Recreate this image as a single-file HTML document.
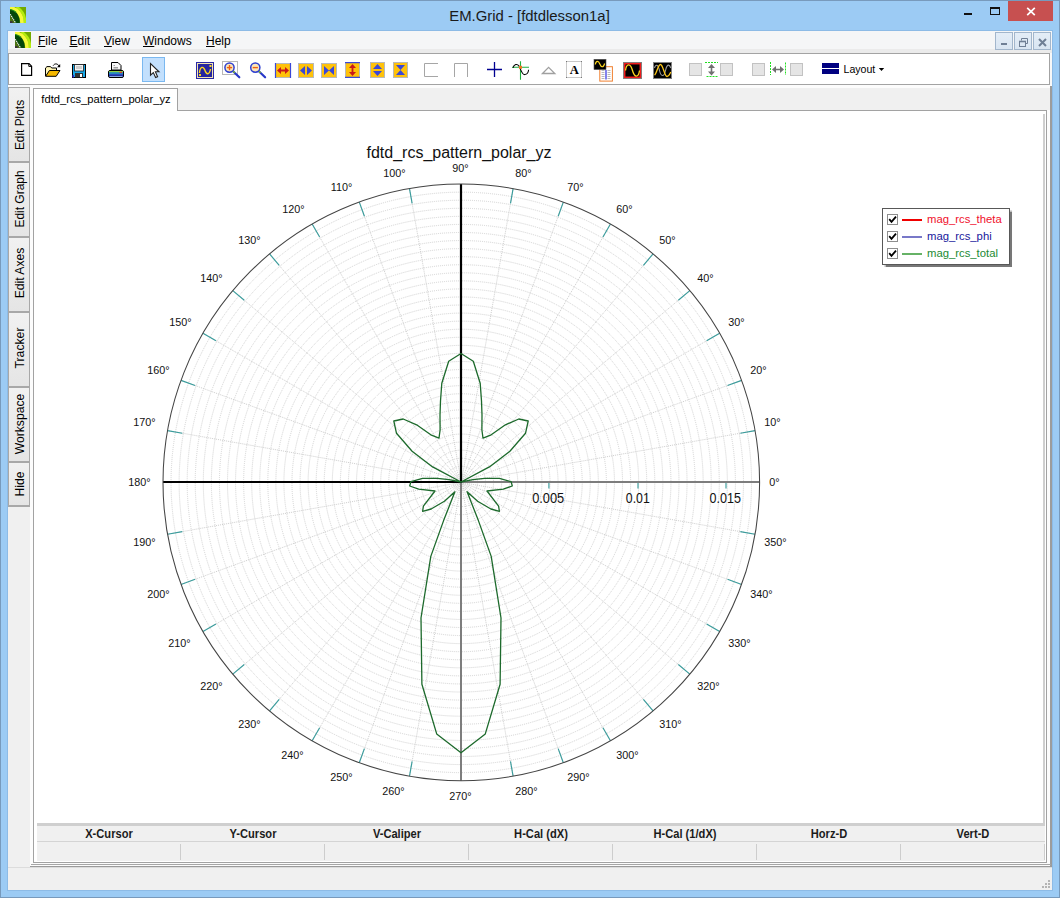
<!DOCTYPE html>
<html>
<head>
<meta charset="utf-8">
<title>EM.Grid - [fdtdlesson1a]</title>
<style>
html,body{margin:0;padding:0;font-family:"Liberation Sans",sans-serif;}
body{width:1060px;height:898px;overflow:hidden;background:#9ccbf4;font-family:"Liberation Sans",sans-serif;color:#000;}
#win{position:relative;width:1060px;height:898px;background:#9ccbf4;overflow:hidden;}
#win div,#win span,#win svg{position:absolute;box-sizing:border-box;}
.frame{left:0;top:0;width:1060px;height:898px;border:1px solid #789abc;}
.title{left:329.5px;top:5px;width:400px;height:22px;text-align:center;font-size:14.9px;line-height:22px;color:#1a1a1a;white-space:nowrap;}
.client{left:8px;top:31px;width:1044px;height:859px;background:#f0f0f0;box-shadow:0 0 0 1px #8dbbe6;}
.menubar{left:8px;top:31px;width:1044px;height:18px;background:#f5f6f7;}
.menustrip{left:8px;top:49px;width:1044px;height:4px;background:#ebebeb;}
.menu{top:33px;height:16px;font-size:12px;line-height:16px;white-space:nowrap;color:#000;}
.menu u{text-decoration:underline;text-decoration-thickness:1px;text-underline-offset:0.6px;}
.toolbar{left:8px;top:53px;width:1042px;height:32px;background:#fff;border:1px solid #a3a3a3;}
.tbgap{left:1050px;top:53px;width:2px;height:33px;background:#f8f8f8;}
.closebtn{left:1008px;top:1px;width:45px;height:20px;background:#c75050;}
.mdib{top:32px;width:18px;height:18px;border:1px solid #a2b6cc;background:linear-gradient(#e4edf7,#d9e5f2);}
.sidetab{left:8px;width:22px;background:linear-gradient(180deg,#f1f1f1,#e5e5e5);border:1px solid #a8a8a8;border-top:none;border-bottom:2px solid #a8a8a8;}
.sidetab span{left:50%;top:50%;transform:translate(-50%,-50%) rotate(-90deg) scaleX(var(--sx,0.89));white-space:nowrap;font-size:13.6px;color:#000;margin-left:-0.5px}
.mdi{left:30px;top:85px;width:1022px;height:782px;background:#fcfcfc;}
.mdir{left:1050px;top:86px;width:2px;height:781px;background:#9c9c9c;}
.mdib1{left:31px;top:864px;width:1020px;height:1px;background:#a6a6a6;}
.mdib2{left:30px;top:866px;width:1022px;height:1.5px;background:#9a9a9a;}
.strip{left:8px;top:85px;width:1044px;height:2px;background:#fbfbfb;}
.tabstrip{left:34px;top:88px;width:1016px;height:22px;background:#f0f0f0;}
.tabpane{left:33px;top:110px;width:1014px;height:753px;border:1px solid #a2a2a2;background:#fff;}
.plot{left:34px;top:111px;width:1011px;height:714px;background:#fff;}
.plotr{left:1043px;top:114px;width:2px;height:711px;background:#cfcfcf;}
.plotb{z-index:3;left:37px;top:823px;width:1008px;height:2.5px;background:#cfcfcf;}
.filetab{left:33px;top:88px;width:145px;height:23px;background:#fff;border:1px solid #a2a2a2;border-bottom:none;font-size:11.2px;line-height:21.5px;text-align:center;white-space:nowrap;padding-left:1px}
.chart{left:34px;top:109px;}
.legend{left:881.5px;top:208px;width:128px;height:57px;background:#fff;border:1px solid #585858;box-shadow:1.5px 1.5px 1px #777;}
.legend .cb{left:4px;width:11px;height:11px;border:1px solid #8e8e8e;background:#fff;}
.legend .ln{left:19.5px;width:19.5px;height:2px;}
.legend .tx{left:44.5px;font-size:11.3px;line-height:13px;white-space:nowrap;}
.th{top:825.5px;height:16px;font-size:12.5px;font-weight:bold;line-height:17px;text-align:center;color:#1c1c1c;white-space:nowrap;transform:scaleX(0.89);}
.tbg{left:37px;top:825px;width:1008px;height:35.5px;background:#f0f0f0;}
.thl{left:37px;top:841px;width:1008px;height:1px;background:#d4d4d4;}
.td{top:843.5px;height:16px;width:1px;background:#cdcdcd;}
.status{left:8px;top:867px;width:1044px;height:23px;background:#f0f0f0;border-top:1px solid #dcdcdc;}
</style>
</head>
<body>
<div id="win">
<div class="frame"></div>
<!-- title bar -->
<svg style="left:10px;top:7px" width="16" height="16" viewBox="0 0 16 16"><rect width="16" height="16" fill="#72aa00"/><path d="M6.5 0C11.5 3 15.2 9 15 16" fill="none" stroke="#b4ec10" stroke-width="2.6"/><path d="M0 0.8C7 1.5 12.2 8 12 16" fill="none" stroke="#f6fa3c" stroke-width="3.6"/><path d="M0 2.2C6 3 10 9 9.8 16H0Z" fill="#04480a"/><path d="M0 2.5C2.5 2.8 4.5 3.8 6 5.2" fill="none" stroke="#2c9a20" stroke-width="1.2"/><path d="M0 7.6L5.4 16H0Z" fill="#4a7212"/><path d="M0.2 7.2L5.8 16.2" fill="none" stroke="#f0f0f0" stroke-width="1.1" stroke-dasharray="1.3 0.7"/><rect x="0" y="14.2" width="2.6" height="1.8" fill="#3a3040"/></svg>
<div class="title">EM.Grid - [fdtdlesson1a]</div>
<div style="left:964px;top:13px;width:8px;height:2px;background:#111"></div>
<div style="left:990px;top:7px;width:10px;height:8px;border:1px solid #111;border-top:2px solid #111"></div>
<div class="closebtn"><svg style="left:17.5px;top:6px" width="10" height="9" viewBox="0 0 10 9"><path d="M1.2 0.8L8.8 8.2M8.8 0.8L1.2 8.2" stroke="#fff" stroke-width="1.7"/></svg></div>
<!-- client -->
<div class="client"></div>
<div class="menubar"></div>
<div class="menustrip"></div>
<svg style="left:15px;top:32px" width="16" height="16" viewBox="0 0 16 16"><rect width="16" height="16" fill="#72aa00"/><path d="M6.5 0C11.5 3 15.2 9 15 16" fill="none" stroke="#b4ec10" stroke-width="2.6"/><path d="M0 0.8C7 1.5 12.2 8 12 16" fill="none" stroke="#f6fa3c" stroke-width="3.6"/><path d="M0 2.2C6 3 10 9 9.8 16H0Z" fill="#04480a"/><path d="M0 2.5C2.5 2.8 4.5 3.8 6 5.2" fill="none" stroke="#2c9a20" stroke-width="1.2"/><path d="M0 7.6L5.4 16H0Z" fill="#4a7212"/><path d="M0.2 7.2L5.8 16.2" fill="none" stroke="#f0f0f0" stroke-width="1.1" stroke-dasharray="1.3 0.7"/><rect x="0" y="14.2" width="2.6" height="1.8" fill="#3a3040"/></svg>
<div class="menu" style="left:38px"><u>F</u>ile</div>
<div class="menu" style="left:69.5px"><u>E</u>dit</div>
<div class="menu" style="left:104px"><u>V</u>iew</div>
<div class="menu" style="left:143px"><u>W</u>indows</div>
<div class="menu" style="left:206px"><u>H</u>elp</div>
<div class="mdib" style="left:995px"><div style="left:5px;top:10px;width:6px;height:2px;background:#6f7f95"></div></div>
<div class="mdib" style="left:1014px"><svg style="left:4px;top:5px" width="9" height="9" viewBox="0 0 9 9"><path d="M2.5 2.5V0.5H8.5V5.5H6.5" fill="none" stroke="#6f7f95"/><rect x="0.5" y="3.5" width="6" height="5" fill="none" stroke="#6f7f95"/><path d="M0 3.5H7" stroke="#6f7f95" stroke-width="1.6"/></svg></div>
<div class="mdib" style="left:1033px"><svg style="left:4px;top:5px" width="9" height="9" viewBox="0 0 9 9"><path d="M1 1L8 8M8 1L1 8" stroke="#6f7f95" stroke-width="2"/></svg></div>
<!-- toolbar -->
<div class="toolbar"></div><div class="tbgap"></div>
<svg style="left:0;top:54px" width="1060" height="30" viewBox="0 54 1060 30">
<path d="M21.6 63.6H29L31.6 66.2V75.4H21.6Z" fill="#fff" stroke="#000" stroke-width="1.2"/><path d="M28.8 63.6V66.4H31.6" fill="none" stroke="#000" stroke-width="1"/>
<path d="M45.5 76V68L47 66.6H50.5L51.7 68H56.5V70.5" fill="#fff6b8" stroke="#000" stroke-width="1"/><path d="M45.6 76.3L49.4 70.5H60L56.2 76.3Z" fill="#f5b800" stroke="#000" stroke-width="1"/><path d="M53.2 65.6C54.5 63.3 57.5 63.2 59.2 66.2" fill="none" stroke="#000" stroke-width="1"/><path d="M57 67.2H60.2V64Z" fill="#000"/>
<rect x="72.5" y="64.5" width="13" height="13" fill="#18a8e8" stroke="#000" stroke-width="1"/><rect x="74.5" y="64.5" width="9" height="6.5" fill="#f4f4f4" stroke="#222" stroke-width="0.8"/><rect x="76" y="66" width="6" height="3" fill="#cfcfcf"/><rect x="75" y="73" width="8" height="4.5" fill="#333"/><rect x="80" y="74" width="2" height="3" fill="#fff"/><rect x="72.5" y="75" width="1.5" height="2.5" fill="#3030d0"/>
<path d="M111.5 70V62.5H118L121 65.5V70Z" fill="#f8f8f8" stroke="#000" stroke-width="1"/><path d="M113.5 65.5H115M113.5 67.5H118M113.5 69H118" stroke="#888" stroke-width="0.8"/><rect x="108.5" y="70.5" width="15" height="7" rx="1.5" fill="#1e2f9a" stroke="#000" stroke-width="1"/><rect x="109" y="71" width="14" height="1.4" fill="#8fd045"/><rect x="109" y="72.4" width="14" height="1.4" fill="#28b0c8"/><rect x="109" y="73.8" width="14" height="1.4" fill="#2848c0"/><rect x="119.5" y="71.8" width="2.5" height="1.2" fill="#e03030"/><rect x="109.5" y="76" width="13" height="1" fill="#88a8e0"/>
<rect x="142.5" y="57.5" width="22" height="24" fill="#c3e0fd" stroke="#7ab8f0" stroke-width="1"/>
<path d="M150.5 63.5V75.2L153.3 72.6L155.6 77.6L157.6 76.7L155.4 71.8H159Z" fill="#fff" stroke="#222" stroke-width="1.1" stroke-linejoin="miter"/>
<rect x="196.5" y="62.5" width="17" height="16" fill="#f3e4b0" stroke="#2a2aa8" stroke-width="1"/><rect x="198" y="64" width="14" height="13" fill="#2525a0"/><path d="M199.5 73C200 66 203.5 66 205 70.5S209.5 75 210.5 69" fill="none" stroke="#ffd820" stroke-width="1.4"/><rect x="209.5" y="65" width="2" height="2" fill="#ffd820"/><rect x="199" y="74" width="2" height="2" fill="#ffd820"/>
<rect x="222.5" y="61.5" width="15" height="13" fill="#fff" stroke="#b8b8b8" stroke-width="1"/>
<path d="M233.3 71.5L239.3 77.3" stroke="#2838c8" stroke-width="2.2" stroke-linecap="round"/>
<path d="M232.7 70.8L234.7 72.8" stroke="#80c020" stroke-width="1.6"/>
<circle cx="229.5" cy="67.6" r="4.6" fill="#fbe6b8" stroke="#3040d0" stroke-width="1.5"/>
<path d="M226.9 67.6H232.1" stroke="#f06010" stroke-width="1.4"/>
<path d="M229.5 65V70.2" stroke="#f06010" stroke-width="1.4"/>
<path d="M259.1 71.5L265.1 77.3" stroke="#2838c8" stroke-width="2.2" stroke-linecap="round"/>
<path d="M258.5 70.8L260.5 72.8" stroke="#80c020" stroke-width="1.6"/>
<circle cx="255.3" cy="67.6" r="4.6" fill="#fbe6b8" stroke="#3040d0" stroke-width="1.5"/>
<path d="M252.7 67.6H257.9" stroke="#f06010" stroke-width="1.4"/>
<rect x="275" y="63" width="16" height="15" fill="#ffc20a"/><path d="M275 63.5H291M275 77.5H291" stroke="#b9b9b9"/><path d="M275.5 63V78M290.5 63V78" stroke="#3a48d8" stroke-width="1.2"/>
<path d="M277 70.5L281 67V69.6H285V67L289 70.5L285 74V71.4H281V74Z" fill="#c8181c"/>
<rect x="298.5" y="63.5" width="15" height="14" fill="#ffc20a" stroke="#b9b9b9"/><path d="M300 70.5L305 66V75ZM312 70.5L307 66V75Z" fill="#3a48d8"/>
<rect x="321.5" y="63.5" width="15" height="14" fill="#ffc20a" stroke="#b9b9b9"/><path d="M324 66L334 75V66L324 75Z" fill="#3a48d8"/>
<rect x="345" y="62" width="15" height="16" fill="#ffc20a"/><path d="M345.5 62V78M359.5 62V78" stroke="#b9b9b9"/><path d="M345 62.6H360M345 77.4H360" stroke="#3a48d8" stroke-width="1.2"/>
<path d="M352.5 64L356 68H353.4V72H356L352.5 76L349 72H351.6V68H349Z" fill="#c8181c"/>
<rect x="370.5" y="62.5" width="14" height="15" fill="#ffc20a" stroke="#b9b9b9"/><path d="M377.5 64L382 69H373ZM377.5 76L382 71H373Z" fill="#3a48d8"/>
<rect x="393.5" y="62.5" width="14" height="15" fill="#ffc20a" stroke="#b9b9b9"/><path d="M396 65H405L396 75H405Z" fill="#3a48d8"/>
<path d="M438 63.5H424.5V76.5H438" fill="none" stroke="#a6a6a6" stroke-width="1"/>
<path d="M454.5 77V63.5H467.5V77" fill="none" stroke="#a6a6a6" stroke-width="1"/>
<path d="M487 69.5H502M494.5 62V77" stroke="#000090" stroke-width="1.3"/>
<path d="M520.5 61.3V79.8M512 67.3H529" stroke="#20b040" stroke-width="1.1"/>
<path d="M513 67.8C514 64 517.3 63.6 518.8 65.8C520.8 69 521.8 74.8 524.8 74.6C527.3 74.4 528.4 72 528.6 69.8" fill="none" stroke="#000" stroke-width="1.05"/>
<rect x="519" y="65.8" width="3" height="3" fill="#f07820"/>
<path d="M542.5 73.5L548.6 67.4L554.8 73.5Z" fill="none" stroke="#a0a0a0" stroke-width="1.3"/>
<rect x="566.5" y="61.5" width="15" height="16" fill="#fff" stroke="#c8c8c8"/>
<g fill="#777"><rect x="566" y="61" width="1" height="1"/><rect x="581" y="61" width="1" height="1"/><rect x="566" y="77" width="1" height="1"/><rect x="581" y="77" width="1" height="1"/></g>
<text x="574.2" y="73.9" font-family="Liberation Serif, serif" font-weight="bold" font-size="12.6" text-anchor="middle" fill="#000">A</text>
<rect x="599.8" y="66.7" width="12.6" height="14.4" fill="#fff" stroke="#f08030" stroke-width="1"/>
<path d="M601.5 70.5H604.5M601.5 72.5H604.5M601.5 74.5H604.5M601.5 76.5H604.5M601.5 78.5H604.5M607.5 70.5H610.5M607.5 72.5H610.5M607.5 74.5H610.5M607.5 76.5H610.5M607.5 78.5H610.5" stroke="#b0b0b0" stroke-width="0.9"/>
<path d="M606 70V79.5" stroke="#3030e0" stroke-width="1.2"/>
<rect x="594" y="59.3" width="12" height="10.3" fill="#000" stroke="#555" stroke-width="0.6"/>
<path d="M595.3 64.5C596 60.5 598.5 60.5 599.8 64S603.5 68 604.6 63.5" fill="none" stroke="#ffd820" stroke-width="1.2"/>
<rect x="623.5" y="62.5" width="18" height="16" fill="#000" stroke="#808080"/><rect x="624.7" y="63.7" width="15.6" height="13.6" fill="none" stroke="#f01c1c" stroke-width="1.5"/>
<path d="M625.5 70.5C626.5 63 630.5 63 632.5 70.5S638.5 78 639.5 70.5" fill="none" stroke="#ffd820" stroke-width="1.3"/>
<rect x="653.5" y="62.5" width="18" height="16" fill="#000" stroke="#808080"/>
<path d="M654.5 68C655.5 64 658 64 659.5 70.5S664 77.5 665.5 70.5S669.5 64 670.8 68" fill="none" stroke="#9a9a9a" stroke-width="1.1"/>
<path d="M654.5 75C656.5 74 658 64.5 660.5 64.5S664.5 76.5 667 76.5S669.5 74 670.8 72" fill="none" stroke="#ffc818" stroke-width="1.3"/>
<rect x="689.5" y="63.5" width="12" height="12" fill="#e5e5e5" stroke="#c2c2c2"/>
<rect x="720.5" y="63.5" width="12" height="12" fill="#e5e5e5" stroke="#c2c2c2"/>
<rect x="752.5" y="63.5" width="12" height="12" fill="#e5e5e5" stroke="#c2c2c2"/>
<rect x="790.5" y="63.5" width="12" height="12" fill="#e5e5e5" stroke="#c2c2c2"/>
<path d="M705 62.5H718M706.5 76.5H718" stroke="#20e020" stroke-width="1" stroke-dasharray="2 1"/>
<path d="M711.5 64L715 68H712.3V71.5H715L711.5 75.5L708 71.5H710.7V68H708Z" fill="#707070"/>
<path d="M770.5 62V75M785.5 62.5V75" stroke="#20e020" stroke-width="1" stroke-dasharray="2 1"/>
<path d="M772 69.5L776 66V68.7H780V66L784 69.5L780 73V70.3H776V73Z" fill="#707070"/>
<rect x="822" y="63" width="17" height="11" fill="#000080"/><rect x="822" y="68" width="17" height="1" fill="#fff"/>
<text x="843.5" y="73" font-family="Liberation Sans, sans-serif" font-size="10.6" fill="#000">Layout</text>
<path d="M878.8 68H884.2L881.5 71Z" fill="#000"/>
</svg>
<!-- side tabs -->
<div class="sidetab" style="top:87px;height:76px;border-top:1px solid #a8a8a8"><span style="--sx:0.875;margin-top:0.6px">Edit Plots</span></div>
<div class="sidetab" style="top:163px;height:75px"><span style="--sx:0.88;margin-top:-0.8px">Edit Graph</span></div>
<div class="sidetab" style="top:238px;height:75px"><span style="--sx:0.895;margin-top:-2px">Edit Axes</span></div>
<div class="sidetab" style="top:313px;height:75px"><span style="--sx:0.9;margin-top:-1.7px">Tracker</span></div>
<div class="sidetab" style="top:388px;height:75px"><span style="--sx:0.892;margin-top:-0.6px">Workspace</span></div>
<div class="sidetab" style="top:463px;height:44px"><span style="--sx:0.89;margin-top:0px">Hide</span></div>
<!-- tab pane -->
<div class="strip"></div>
<div class="mdi"></div>
<div class="tabstrip"></div>
<div class="tabpane"></div>
<div class="plot"></div>
<div class="plotr"></div>
<div class="plotb"></div>
<div class="mdir"></div>
<div class="mdib1"></div>
<div class="mdib2"></div>
<div class="filetab">fdtd_rcs_pattern_polar_yz</div>
<svg class="chart" width="1010" height="716" viewBox="34 109 1010 716">
<g fill="none" stroke="#d2d2d2" stroke-width="1" stroke-dasharray="1 1">
<circle cx="461.30" cy="482.40" r="8.06"/>
<circle cx="461.30" cy="482.40" r="16.12"/>
<circle cx="461.30" cy="482.40" r="24.19"/>
<circle cx="461.30" cy="482.40" r="32.25"/>
<circle cx="461.30" cy="482.40" r="40.31"/>
<circle cx="461.30" cy="482.40" r="48.37"/>
<circle cx="461.30" cy="482.40" r="56.44"/>
<circle cx="461.30" cy="482.40" r="64.50"/>
<circle cx="461.30" cy="482.40" r="72.56"/>
<circle cx="461.30" cy="482.40" r="80.62"/>
<circle cx="461.30" cy="482.40" r="88.68"/>
<circle cx="461.30" cy="482.40" r="96.75"/>
<circle cx="461.30" cy="482.40" r="104.81"/>
<circle cx="461.30" cy="482.40" r="112.87"/>
<circle cx="461.30" cy="482.40" r="120.93"/>
<circle cx="461.30" cy="482.40" r="128.99"/>
<circle cx="461.30" cy="482.40" r="137.06"/>
<circle cx="461.30" cy="482.40" r="145.12"/>
<circle cx="461.30" cy="482.40" r="153.18"/>
<circle cx="461.30" cy="482.40" r="161.24"/>
<circle cx="461.30" cy="482.40" r="169.31"/>
<circle cx="461.30" cy="482.40" r="177.37"/>
<circle cx="461.30" cy="482.40" r="185.43"/>
<circle cx="461.30" cy="482.40" r="193.49"/>
<circle cx="461.30" cy="482.40" r="201.55"/>
<circle cx="461.30" cy="482.40" r="209.62"/>
<circle cx="461.30" cy="482.40" r="217.68"/>
<circle cx="461.30" cy="482.40" r="225.74"/>
<circle cx="461.30" cy="482.40" r="233.80"/>
<circle cx="461.30" cy="482.40" r="241.86"/>
<circle cx="461.30" cy="482.40" r="249.93"/>
<circle cx="461.30" cy="482.40" r="257.99"/>
<circle cx="461.30" cy="482.40" r="266.05"/>
<circle cx="461.30" cy="482.40" r="274.11"/>
<circle cx="461.30" cy="482.40" r="282.18"/>
<circle cx="461.30" cy="482.40" r="290.24"/>
</g>
<g stroke="#cecece" stroke-width="1" stroke-dasharray="1 1">
<line x1="461.30" y1="482.40" x2="755.07" y2="430.60"/>
<line x1="461.30" y1="482.40" x2="741.61" y2="380.38"/>
<line x1="461.30" y1="482.40" x2="719.64" y2="333.25"/>
<line x1="461.30" y1="482.40" x2="689.81" y2="290.66"/>
<line x1="461.30" y1="482.40" x2="653.04" y2="253.89"/>
<line x1="461.30" y1="482.40" x2="610.45" y2="224.06"/>
<line x1="461.30" y1="482.40" x2="563.32" y2="202.09"/>
<line x1="461.30" y1="482.40" x2="513.10" y2="188.63"/>
<line x1="461.30" y1="482.40" x2="409.50" y2="188.63"/>
<line x1="461.30" y1="482.40" x2="359.28" y2="202.09"/>
<line x1="461.30" y1="482.40" x2="312.15" y2="224.06"/>
<line x1="461.30" y1="482.40" x2="269.56" y2="253.89"/>
<line x1="461.30" y1="482.40" x2="232.79" y2="290.66"/>
<line x1="461.30" y1="482.40" x2="202.96" y2="333.25"/>
<line x1="461.30" y1="482.40" x2="180.99" y2="380.38"/>
<line x1="461.30" y1="482.40" x2="167.53" y2="430.60"/>
<line x1="461.30" y1="482.40" x2="167.53" y2="534.20"/>
<line x1="461.30" y1="482.40" x2="180.99" y2="584.42"/>
<line x1="461.30" y1="482.40" x2="202.96" y2="631.55"/>
<line x1="461.30" y1="482.40" x2="232.79" y2="674.14"/>
<line x1="461.30" y1="482.40" x2="269.56" y2="710.91"/>
<line x1="461.30" y1="482.40" x2="312.15" y2="740.74"/>
<line x1="461.30" y1="482.40" x2="359.28" y2="762.71"/>
<line x1="461.30" y1="482.40" x2="409.50" y2="776.17"/>
<line x1="461.30" y1="482.40" x2="513.10" y2="776.17"/>
<line x1="461.30" y1="482.40" x2="563.32" y2="762.71"/>
<line x1="461.30" y1="482.40" x2="610.45" y2="740.74"/>
<line x1="461.30" y1="482.40" x2="653.04" y2="710.91"/>
<line x1="461.30" y1="482.40" x2="689.81" y2="674.14"/>
<line x1="461.30" y1="482.40" x2="719.64" y2="631.55"/>
<line x1="461.30" y1="482.40" x2="741.61" y2="584.42"/>
<line x1="461.30" y1="482.40" x2="755.07" y2="534.20"/>
</g>
<g stroke="#3a9c9c" stroke-width="1.15">
<line x1="755.07" y1="430.60" x2="740.30" y2="433.21"/>
<line x1="741.61" y1="380.38" x2="727.51" y2="385.51"/>
<line x1="719.64" y1="333.25" x2="706.64" y2="340.75"/>
<line x1="689.81" y1="290.66" x2="678.32" y2="300.30"/>
<line x1="653.04" y1="253.89" x2="643.40" y2="265.38"/>
<line x1="610.45" y1="224.06" x2="602.95" y2="237.06"/>
<line x1="563.32" y1="202.09" x2="558.19" y2="216.19"/>
<line x1="513.10" y1="188.63" x2="510.49" y2="203.40"/>
<line x1="409.50" y1="188.63" x2="412.11" y2="203.40"/>
<line x1="359.28" y1="202.09" x2="364.41" y2="216.19"/>
<line x1="312.15" y1="224.06" x2="319.65" y2="237.06"/>
<line x1="269.56" y1="253.89" x2="279.20" y2="265.38"/>
<line x1="232.79" y1="290.66" x2="244.28" y2="300.30"/>
<line x1="202.96" y1="333.25" x2="215.96" y2="340.75"/>
<line x1="180.99" y1="380.38" x2="195.09" y2="385.51"/>
<line x1="167.53" y1="430.60" x2="182.30" y2="433.21"/>
<line x1="167.53" y1="534.20" x2="182.30" y2="531.59"/>
<line x1="180.99" y1="584.42" x2="195.09" y2="579.29"/>
<line x1="202.96" y1="631.55" x2="215.96" y2="624.05"/>
<line x1="232.79" y1="674.14" x2="244.28" y2="664.50"/>
<line x1="269.56" y1="710.91" x2="279.20" y2="699.42"/>
<line x1="312.15" y1="740.74" x2="319.65" y2="727.74"/>
<line x1="359.28" y1="762.71" x2="364.41" y2="748.61"/>
<line x1="409.50" y1="776.17" x2="412.11" y2="761.40"/>
<line x1="513.10" y1="776.17" x2="510.49" y2="761.40"/>
<line x1="563.32" y1="762.71" x2="558.19" y2="748.61"/>
<line x1="610.45" y1="740.74" x2="602.95" y2="727.74"/>
<line x1="653.04" y1="710.91" x2="643.40" y2="699.42"/>
<line x1="689.81" y1="674.14" x2="678.32" y2="664.50"/>
<line x1="719.64" y1="631.55" x2="706.64" y2="624.05"/>
<line x1="741.61" y1="584.42" x2="727.51" y2="579.29"/>
<line x1="755.07" y1="534.20" x2="740.30" y2="531.59"/>
</g>
<line x1="461.0" y1="482.0" x2="759.6" y2="482.0" stroke="#7d7d7d" stroke-width="2"/>
<line x1="461.0" y1="482.0" x2="461.0" y2="780.7" stroke="#7d7d7d" stroke-width="2"/>
<line x1="163.0" y1="482.0" x2="462.0" y2="482.0" stroke="#000" stroke-width="2.2"/>
<line x1="461.0" y1="184.1" x2="461.0" y2="483.0" stroke="#000" stroke-width="2.2"/>
<g stroke="#3a9c9c" stroke-width="1.15">
<line x1="548.9" y1="483" x2="548.9" y2="488.5"/>
<line x1="638.0" y1="483" x2="638.0" y2="488.5"/>
<line x1="726.0" y1="483" x2="726.0" y2="488.5"/>
</g>
<circle cx="461.30" cy="482.40" r="298.30" fill="none" stroke="#444" stroke-width="1.05"/>
<polyline fill="none" stroke="#1d6a2c" stroke-width="1.3" stroke-linejoin="round" points="461.0,353.5 473.3,361.2 480.2,383.3 481.5,401.0 482.0,415.0 481.9,430.0 483.0,438.2 491.2,434.8 505.4,424.8 518.8,419.0 528.2,421.0 525.5,433.3 509.9,451.3 489.4,466.9 461.0,482.0 472.9,479.7 484.6,478.4 499.4,478.4 511.1,481.7 512.3,486.0 503.3,489.1 487.0,491.0 498.6,506.2 499.4,511.3 490.9,509.0 477.6,501.2 467.1,491.8 478.4,520.6 486.2,542.4 491.2,556.4 501.0,618.0 500.1,684.3 485.3,733.9 461.0,752.8 436.7,733.9 421.9,684.3 421.0,618.0 430.8,556.4 435.8,542.4 443.6,520.6 454.9,491.8 444.4,501.2 431.1,509.0 422.6,511.3 423.4,506.2 435.0,491.0 418.7,489.1 409.7,486.0 410.9,481.7 422.6,478.4 437.4,478.4 449.1,479.7 461.0,482.0 432.6,466.9 412.1,451.3 396.5,433.3 393.8,421.0 403.2,419.0 416.6,424.8 430.8,434.8 439.0,438.2 440.1,430.0 440.0,415.0 440.5,401.0 441.8,383.3 448.7,361.2 461.0,353.5"/>
<g font-family="Liberation Sans, sans-serif" font-size="10.8" fill="#111" text-anchor="middle">
<text x="774.5" y="486.0">0°</text>
<text x="772.5" y="426.0">10°</text>
<text x="758.5" y="374.0">20°</text>
<text x="736.5" y="326.0">30°</text>
<text x="705.5" y="282.0">40°</text>
<text x="667.5" y="244.0">50°</text>
<text x="624.5" y="213.0">60°</text>
<text x="575.5" y="191.0">70°</text>
<text x="523.5" y="177.0">80°</text>
<text x="460.5" y="172.0">90°</text>
<text x="394.5" y="177.0">100°</text>
<text x="341.5" y="191.0">110°</text>
<text x="293.5" y="213.0">120°</text>
<text x="249.5" y="244.0">130°</text>
<text x="211.5" y="282.0">140°</text>
<text x="180.5" y="326.0">150°</text>
<text x="158.5" y="374.0">160°</text>
<text x="144.5" y="426.0">170°</text>
<text x="139.5" y="486.0">180°</text>
<text x="144.5" y="546.0">190°</text>
<text x="158.5" y="598.0">200°</text>
<text x="179.5" y="647.0">210°</text>
<text x="211.5" y="690.0">220°</text>
<text x="249.5" y="728.0">230°</text>
<text x="292.5" y="759.0">240°</text>
<text x="341.5" y="781.0">250°</text>
<text x="393.5" y="795.0">260°</text>
<text x="460.5" y="800.0">270°</text>
<text x="526.5" y="795.0">280°</text>
<text x="578.5" y="781.0">290°</text>
<text x="627.5" y="759.0">300°</text>
<text x="670.5" y="728.0">310°</text>
<text x="708.5" y="690.0">320°</text>
<text x="739.5" y="647.0">330°</text>
<text x="761.5" y="598.0">340°</text>
<text x="775.5" y="546.0">350°</text>
</g>
<g font-family="Liberation Sans, sans-serif" font-size="14" fill="#111" text-anchor="middle">
<text x="548.2" y="503" textLength="32.1" lengthAdjust="spacingAndGlyphs">0.005</text>
<text x="637.8" y="503" textLength="24.0" lengthAdjust="spacingAndGlyphs">0.01</text>
<text x="725.2" y="503" textLength="31.4" lengthAdjust="spacingAndGlyphs">0.015</text>
</g>
<text x="459" y="157.8" font-family="Liberation Sans, sans-serif" font-size="16" fill="#111" text-anchor="middle">fdtd_rcs_pattern_polar_yz</text>
</svg>
<div class="legend">
<div class="cb" style="top:5px"><svg style="left:0;top:0" width="9" height="9" viewBox="0 0 9 9"><path d="M1.2 4.2L3.5 6.8L8 1.6" fill="none" stroke="#000" stroke-width="1.8"/></svg></div>
<div class="cb" style="top:22px"><svg style="left:0;top:0" width="9" height="9" viewBox="0 0 9 9"><path d="M1.2 4.2L3.5 6.8L8 1.6" fill="none" stroke="#000" stroke-width="1.8"/></svg></div>
<div class="cb" style="top:39px"><svg style="left:0;top:0" width="9" height="9" viewBox="0 0 9 9"><path d="M1.2 4.2L3.5 6.8L8 1.6" fill="none" stroke="#000" stroke-width="1.8"/></svg></div>
<div class="ln" style="top:10px;background:#f00000"></div>
<div class="ln" style="top:27px;background:#7878c8;height:2px"></div>
<div class="ln" style="top:44px;background:#66b266;height:2px"></div>
<div class="tx" style="top:4px;color:#f0102c">mag_rcs_theta</div>
<div class="tx" style="top:21px;color:#18189c">mag_rcs_phi</div>
<div class="tx" style="top:38px;color:#1b8a33">mag_rcs_total</div>
</div>
<!-- bottom table -->
<div class="tbg"></div>
<div class="thl"></div>
<div class="th" style="left:37px;width:144px">X-Cursor</div>
<div class="td" style="left:180px"></div>
<div class="th" style="left:181px;width:144px">Y-Cursor</div>
<div class="td" style="left:324px"></div>
<div class="th" style="left:325px;width:144px">V-Caliper</div>
<div class="td" style="left:468px"></div>
<div class="th" style="left:469px;width:144px">H-Cal (dX)</div>
<div class="td" style="left:612px"></div>
<div class="th" style="left:613px;width:144px">H-Cal (1/dX)</div>
<div class="td" style="left:756px"></div>
<div class="th" style="left:757px;width:144px">Horz-D</div>
<div class="td" style="left:900px"></div>
<div class="th" style="left:901px;width:144px">Vert-D</div>
<div class="td" style="left:1044px"></div>
<div class="status"></div>
<svg style="left:1041px;top:879px" width="10" height="10" viewBox="0 0 10 10"><g fill="#b4b4b4"><rect x="7" y="1" width="2" height="2"/><rect x="4" y="4" width="2" height="2"/><rect x="7" y="4" width="2" height="2"/><rect x="1" y="7" width="2" height="2"/><rect x="4" y="7" width="2" height="2"/><rect x="7" y="7" width="2" height="2"/></g></svg>
</div>
</body>
</html>
